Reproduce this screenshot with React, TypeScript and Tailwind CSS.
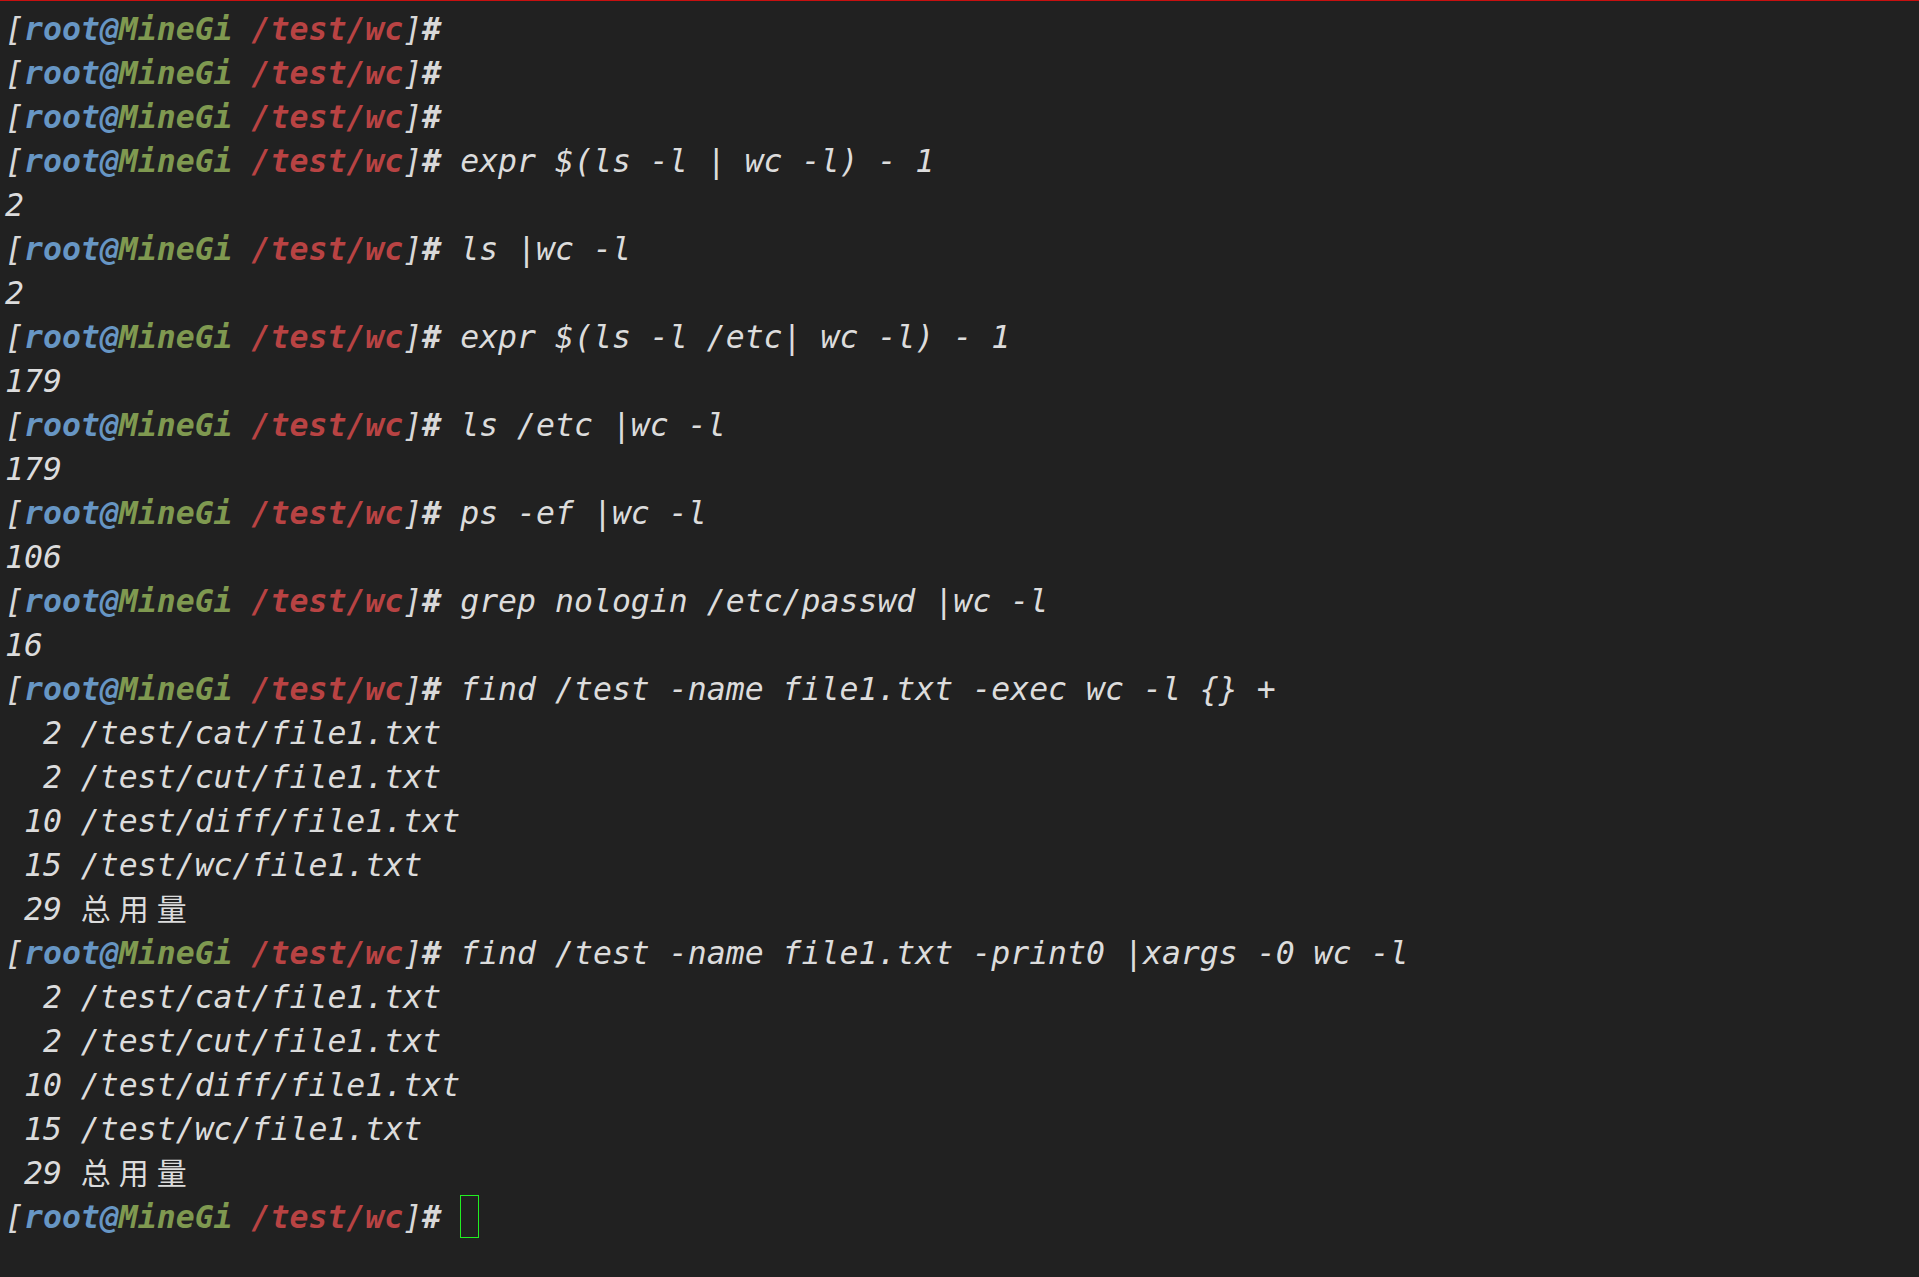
import React from "react";

const mono = "font-['DejaVu_Sans_Mono','Liberation_Mono',monospace]";

function Prompt({ cmd, cursor }: { cmd?: string; cursor?: boolean }) {
  return (
    <div className="h-[44px] leading-[44px] whitespace-pre">
      <span className="text-[#d8d8d8]">[</span>
      <span className="font-bold text-[#6796c4]">root@</span>
      <span className="font-bold text-[#7f9950]">MineGi</span>
      <span className="font-bold"> </span>
      <span className="font-bold text-[#b84343]">/test/wc</span>
      <span className="text-[#d8d8d8]">]</span>
      <span className="font-bold text-[#d8d8d8]">#</span>
      {cmd !== undefined && <span className="text-[#dcdcdc]"> {cmd}</span>}
      {cursor && (
        <>
          <span className="text-[#dcdcdc]"> </span>
          <span className="inline-block w-[19px] h-[43px] align-top border border-[#22ee22]" />
        </>
      )}
    </div>
  );
}

function Out({ text }: { text: string }) {
  // CJK characters take two cells in the terminal
  const parts = text.split(/([\u4e00-\u9fff])/).filter((p) => p !== "");
  return (
    <div className="h-[44px] leading-[44px] whitespace-pre text-[#dcdcdc]">
      {parts.map((p, i) =>
        /[\u4e00-\u9fff]/.test(p) ? (
          <span
            key={i}
            className="inline-block w-[38px] h-[44px] leading-[40px] align-top not-italic font-['Noto_Sans_CJK_SC',sans-serif] text-[30px]"
          >
            {p}
          </span>
        ) : (
          <span key={i}>{p}</span>
        )
      )}
    </div>
  );
}

export default function App() {
  const findOut = [
    "  2 /test/cat/file1.txt",
    "  2 /test/cut/file1.txt",
    " 10 /test/diff/file1.txt",
    " 15 /test/wc/file1.txt",
    " 29 总用量",
  ];

  return (
    <main className={`w-[1919px] h-[1277px] bg-[#212121] border-t border-[#c81010] overflow-hidden ${mono}`}>
      <div className="pt-[6px] pl-[5px] italic text-[31.5px]">
        <Prompt />
        <Prompt />
        <Prompt />
        <Prompt cmd="expr $(ls -l | wc -l) - 1" />
        <Out text="2" />
        <Prompt cmd="ls |wc -l" />
        <Out text="2" />
        <Prompt cmd="expr $(ls -l /etc| wc -l) - 1" />
        <Out text="179" />
        <Prompt cmd="ls /etc |wc -l" />
        <Out text="179" />
        <Prompt cmd="ps -ef |wc -l" />
        <Out text="106" />
        <Prompt cmd="grep nologin /etc/passwd |wc -l" />
        <Out text="16" />
        <Prompt cmd="find /test -name file1.txt -exec wc -l {} +" />
        {findOut.map((t, i) => (
          <Out key={"a" + i} text={t} />
        ))}
        <Prompt cmd="find /test -name file1.txt -print0 |xargs -0 wc -l" />
        {findOut.map((t, i) => (
          <Out key={"b" + i} text={t} />
        ))}
        <Prompt cursor />
      </div>
    </main>
  );
}
